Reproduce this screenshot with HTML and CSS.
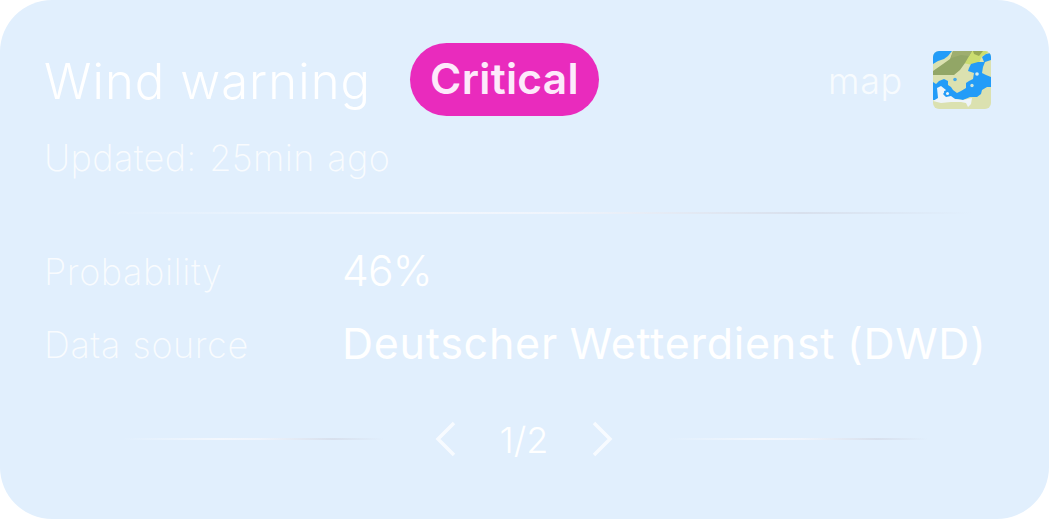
FILE: index.html
```html
<!DOCTYPE html>
<html lang="en">
<head>
  <meta charset="UTF-8" />
  <meta name="viewport" content="width=device-width, initial-scale=1.0"/>
  <title>Wind warning</title>
  <link rel="stylesheet" href="styles.css">
</head>
<body>

  <div class="card">
    <div class="header">
      <h1>Wind warning</h1>
      <span class="badge">Critical</span>
      <a class="map-link">
        <span class="map-label">map</span>
        <svg class="map-icon" viewBox="0 0 58 58">
          <rect width="58" height="58" fill="#dbe1b0"/>
          <path d="M0 0H19L15 5L11 8L5 10L0 13Z" fill="#239cf8"/>
          <path d="M38 0H56L52 4L49 5L46 12L40 14L30 12Z" fill="#cbdd70"/>
          <path d="M40 0H50L46 5L41 3Z" fill="#98aa55"/>
          <path d="M20 0H39L32 12L27 19L21 24H0V20L10 13L17 8Z" fill="#92a666"/>
          <path d="M20 0H39L36 5L28 4L18 7Z" fill="#9eae6e"/>
          <path d="M58 2L53 3L49 6L51 11L45 11L38 13L36 17L35 20L41 22L40 28L36 30L33 32L33 37L28 40L24 42L20 39L18 36L15 34L15 30L11 28L6 30L3 33L0 31V49L8 49L15 47L23 48L30 49L37 46L44 46L48 43L49 39L54 36L58 36V26L53 24L49 22L50 16L52 11L58 9Z" fill="#239cf8"/>
          <circle cx="22" cy="28.500" r="1.800" fill="#48a9e9"/>
          <path d="M4 37L8 35L13 39L10 43L13 46L18 45L22 48L30 49L39 47L38 53L35 56L33 52L28 51L18 51L8 52L0 50L5 47Z" fill="#eef4f9"/>
          <path d="M11 40L16 39L19 42L17 45L12 45Z" fill="#239cf8"/>
          <circle cx="14.500" cy="42.500" r="1.500" fill="#edf3f5"/>
          <circle cx="44" cy="23" r="1.800" fill="#d7edf0"/>
          <circle cx="39" cy="34.500" r="1.700" fill="#cfe6df"/>
        </svg>
      </a>
    </div>
    <div class="updated">Updated: 25min ago</div>

    <div class="line"></div>

    <div class="details">
      <span class="label">Probability</span>
      <span class="value percent">46%</span>
      <span class="label">Data source</span>
      <span class="value">Deutscher Wetterdienst (DWD)</span>
    </div>

    <div class="pager">
      <div class="line"></div>
      <div class="pages">
        <svg class="arrow" viewBox="0 0 22 36"><path d="M20 2L4 18L20 34"/></svg>
        <span class="page">1/2</span>
        <svg class="arrow" viewBox="0 0 22 36"><path d="M2 2L18 18L2 34"/></svg>
      </div>
      <div class="line"></div>
    </div>
  </div>

</body>
</html>
```

FILE: styles.css
```css
* {
  box-sizing: border-box;
}

body {
  margin: 0;
  background-color: white;
  font-family: "Inter", Arial, sans-serif;
}

.card {
  height: 519px;
  padding: 43px 58px 0 44px;
  border-radius: 52px;
  background-color: #e1effd;
  color: white;
  white-space: nowrap;
}

.header {
  display: flex;
  align-items: center;
  height: 73px;
}

h1 {
  width: 366px;
  margin: 3px 0 0;
  font-size: 49px;
  font-weight: 300;
  letter-spacing: 1.05px;
}

.badge {
  width: 189px;
  height: 73px;
  border-radius: 37px;
  background-color: #e92bbd;
  color: #fdeafb;
  font-size: 42.5px;
  font-weight: 600;
  letter-spacing: 0.3px;
  line-height: 72px;
  text-align: center;
}

.map-link {
  display: flex;
  align-items: center;
  gap: 30px;
  margin-left: auto;
}

.map-label {
  margin-top: 2px;
  font-size: 36px;
  font-weight: 300;
  letter-spacing: 0.7px;
  opacity: 0.75;
}

.map-icon {
  width: 58px;
  height: 58px;
  border-radius: 6px;
}

.updated {
  height: 84px;
  margin-top: 12px;
  font-size: 36px;
  font-weight: 250;
  letter-spacing: 0.4px;
  word-spacing: 2px;
  line-height: 60px;
  opacity: 0.8;
}

.line {
  height: 2px;
  background: linear-gradient(90deg, rgba(243, 247, 253, 0) 6%, #f3f7fd 40%, #eff4fc 54%, #d8e0ed 80%, rgba(216, 224, 237, 0) 98%);
}

.details {
  display: grid;
  grid-template-columns: 298px auto;
  grid-template-rows: 73px 73px;
  align-items: center;
  margin-top: 21px;
}

.label {
  font-size: 36px;
  font-weight: 250;
  letter-spacing: 0.6px;
  word-spacing: 1px;
  opacity: 0.8;
}

.value {
  margin-top: -3px;
  font-size: 43px;
  font-weight: 400;
  letter-spacing: 0.75px;
  word-spacing: -1px;
}

.percent {
  font-size: 42.5px;
  font-weight: 350;
  letter-spacing: -0.8px;
}

.pager {
  display: flex;
  align-items: center;
  height: 40px;
  margin: 38px 0 0 61px;
}

.pager .line {
  width: 285px;
}

.pages {
  display: flex;
  align-items: center;
  justify-content: space-between;
  width: 180px;
  margin: 0 35px 0 44px;
}

.page {
  margin-top: 2px;
  font-size: 36px;
  font-weight: 300;
}

.arrow {
  width: 22px;
  height: 36px;
  fill: none;
  stroke: #f7fbff;
  stroke-width: 3.5;
}
```
